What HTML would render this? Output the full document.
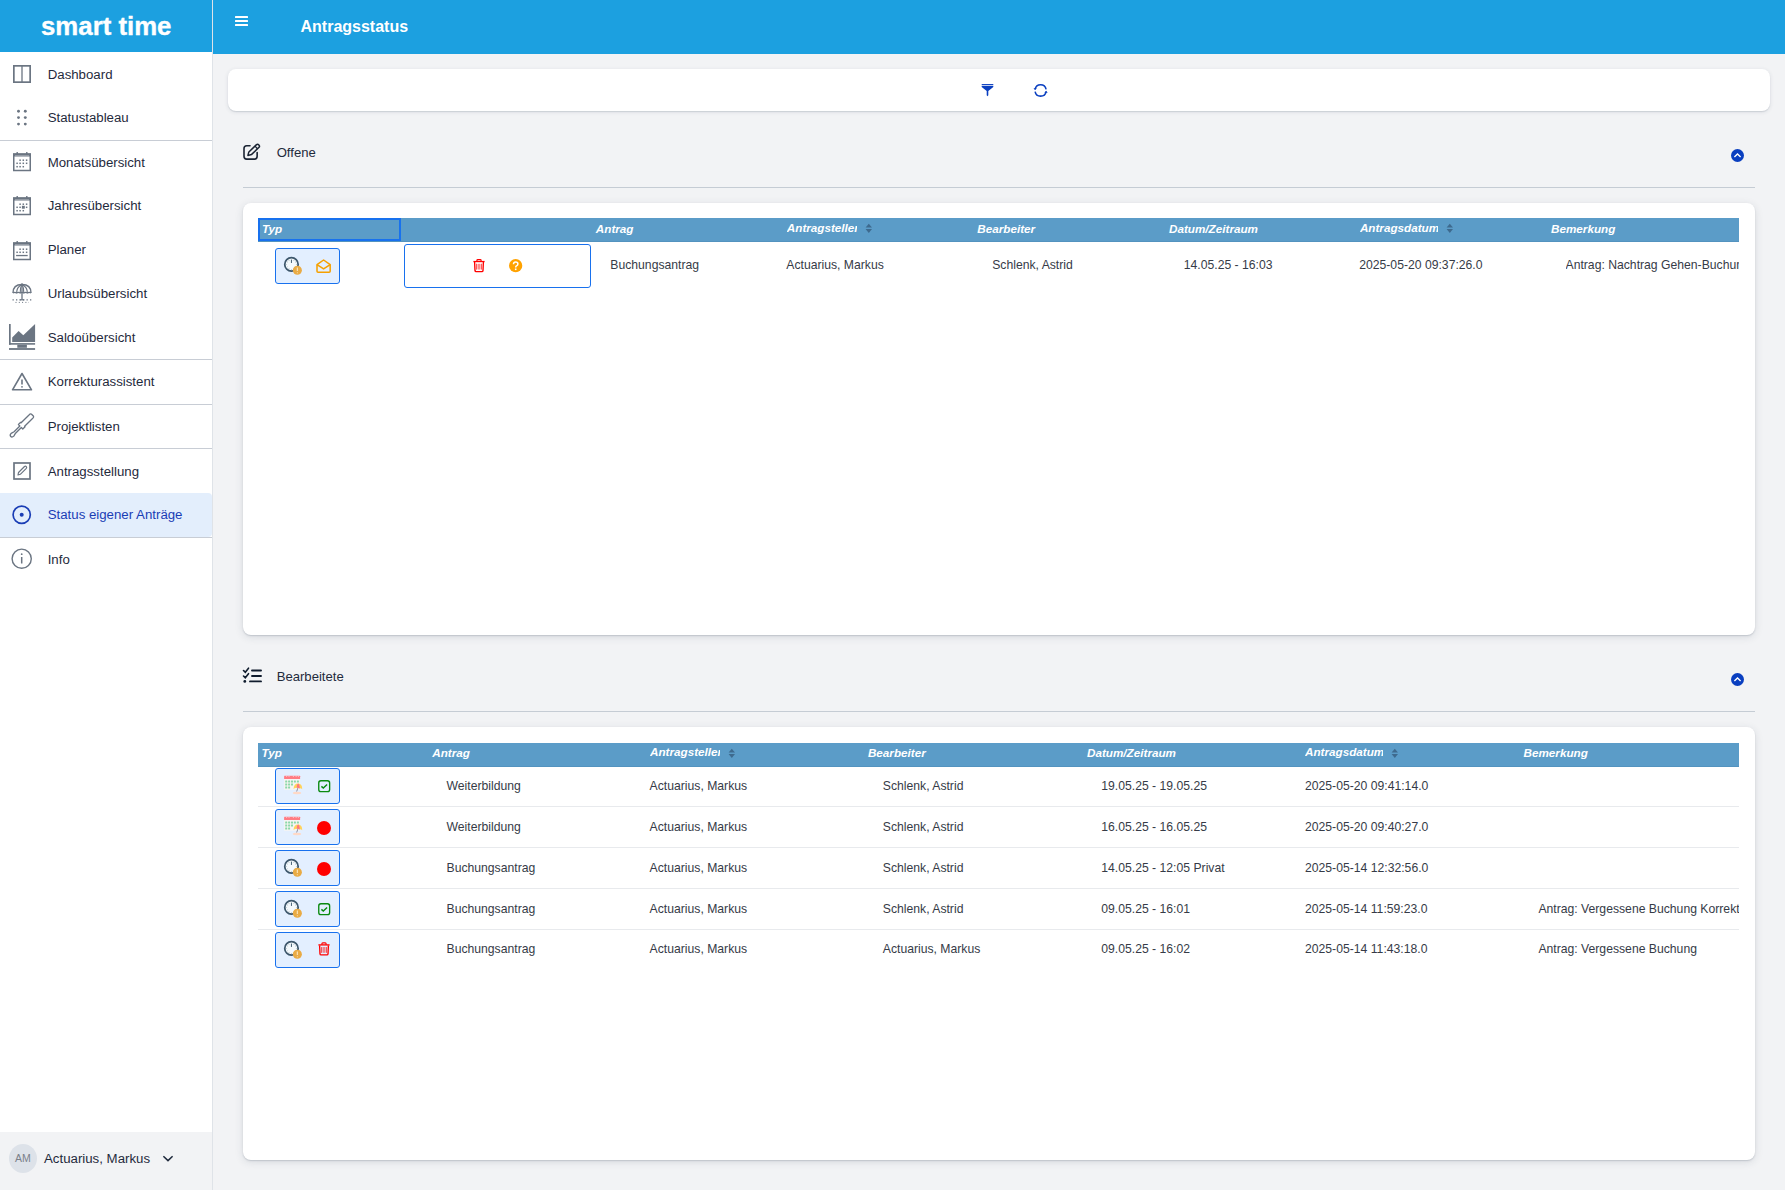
<!DOCTYPE html>
<html><head><meta charset="utf-8"><title>smart time - Antragsstatus</title>
<style>
html,body{margin:0;padding:0;width:1785px;height:1190px;overflow:hidden;background:#f2f3f5;}
body{position:relative;font-family:"Liberation Sans", sans-serif;}
.t{position:absolute;white-space:nowrap;}
svg{overflow:visible;}
</style></head><body>
<div style="position:absolute;left:0px;top:0px;width:1785px;height:1190px;background:#f2f3f5"></div><div style="position:absolute;left:213px;top:0px;width:1572px;height:54px;background:#1ca0e0"></div><div style="position:absolute;left:235px;top:16px;width:13.4px;height:1.85px;background:#fff;border-radius:0.5px"></div><div style="position:absolute;left:235px;top:20.05px;width:13.4px;height:1.85px;background:#fff;border-radius:0.5px"></div><div style="position:absolute;left:235px;top:24.1px;width:13.4px;height:1.85px;background:#fff;border-radius:0.5px"></div><div class="t" style="left:300.5px;top:19.46px;font-size:16px;line-height:16px;font-weight:bold;font-style:normal;color:#fff;">Antragsstatus</div><div style="position:absolute;left:0px;top:0px;width:212px;height:1190px;background:#fff"></div><div style="position:absolute;left:212px;top:0px;width:1px;height:1190px;background:#dfe3e8"></div><div style="position:absolute;left:0px;top:0px;width:212px;height:52px;background:#1ca0e0"></div><div class="t" style="left:41px;top:13.66px;font-size:25.8px;line-height:25.8px;font-weight:bold;font-style:normal;color:#fff;-webkit-text-stroke:0.35px #fff;">smart time</div><div style="position:absolute;left:0px;top:493px;width:212px;height:44px;background:#e3eefc;border-radius:0 4px 4px 0"></div><div style="position:absolute;left:0px;top:140px;width:212px;height:1px;background:#c8cdd5"></div><div style="position:absolute;left:0px;top:359px;width:212px;height:1px;background:#c8cdd5"></div><div style="position:absolute;left:0px;top:404px;width:212px;height:1px;background:#c8cdd5"></div><div style="position:absolute;left:0px;top:448px;width:212px;height:1px;background:#c8cdd5"></div><div style="position:absolute;left:0px;top:537px;width:212px;height:1px;background:#c8cdd5"></div><div class="t" style="left:47.7px;top:67.78px;font-size:13.25px;line-height:13.25px;font-weight:normal;font-style:normal;color:#1f2a3c;">Dashboard</div><div class="t" style="left:47.7px;top:110.98px;font-size:13.25px;line-height:13.25px;font-weight:normal;font-style:normal;color:#1f2a3c;">Statustableau</div><div class="t" style="left:47.7px;top:155.98px;font-size:13.25px;line-height:13.25px;font-weight:normal;font-style:normal;color:#1f2a3c;">Monatsübersicht</div><div class="t" style="left:47.7px;top:199.48px;font-size:13.25px;line-height:13.25px;font-weight:normal;font-style:normal;color:#1f2a3c;">Jahresübersicht</div><div class="t" style="left:47.7px;top:242.78px;font-size:13.25px;line-height:13.25px;font-weight:normal;font-style:normal;color:#1f2a3c;">Planer</div><div class="t" style="left:47.7px;top:286.58px;font-size:13.25px;line-height:13.25px;font-weight:normal;font-style:normal;color:#1f2a3c;">Urlaubsübersicht</div><div class="t" style="left:47.7px;top:330.78px;font-size:13.25px;line-height:13.25px;font-weight:normal;font-style:normal;color:#1f2a3c;">Saldoübersicht</div><div class="t" style="left:47.7px;top:374.68px;font-size:13.25px;line-height:13.25px;font-weight:normal;font-style:normal;color:#1f2a3c;">Korrekturassistent</div><div class="t" style="left:47.7px;top:419.68px;font-size:13.25px;line-height:13.25px;font-weight:normal;font-style:normal;color:#1f2a3c;">Projektlisten</div><div class="t" style="left:47.7px;top:464.68px;font-size:13.25px;line-height:13.25px;font-weight:normal;font-style:normal;color:#1f2a3c;">Antragsstellung</div><div class="t" style="left:47.7px;top:507.88px;font-size:13.25px;line-height:13.25px;font-weight:normal;font-style:normal;color:#1a3db5;">Status eigener Anträge</div><div class="t" style="left:47.7px;top:552.58px;font-size:13.25px;line-height:13.25px;font-weight:normal;font-style:normal;color:#1f2a3c;">Info</div><svg style="position:absolute;left:13px;top:65px" width="18" height="18" viewBox="0 0 18 18"><rect x="0.85" y="0.85" width="16.3" height="16.3" fill="none" stroke="#6b7582" stroke-width="1.7"/><line x1="9" y1="1" x2="9" y2="17" stroke="#6b7582" stroke-width="1.3"/></svg><svg style="position:absolute;left:16px;top:109px" width="12" height="18" viewBox="0 0 12 18"><circle cx="2.5" cy="2.3" r="1.45" fill="#6b7582"/><circle cx="2.5" cy="8.6" r="1.45" fill="#6b7582"/><circle cx="2.5" cy="15.1" r="1.45" fill="#6b7582"/><circle cx="9.3" cy="2.3" r="1.45" fill="#6b7582"/><circle cx="9.3" cy="8.6" r="1.45" fill="#6b7582"/><circle cx="9.3" cy="15.1" r="1.45" fill="#6b7582"/></svg><svg style="position:absolute;left:13px;top:152px" width="18" height="19" viewBox="0 0 18 19"><rect x="0.75" y="1.9" width="16.5" height="16.6" fill="none" stroke="#6b7582" stroke-width="1.5"/><rect x="0.75" y="1.9" width="16.5" height="2.6" fill="#6b7582"/><rect x="2" y="3" width="14" height="0.8" fill="#fff" opacity="0.35"/><rect x="3.5" y="0" width="1.4" height="2.6" fill="#6b7582"/><rect x="13.1" y="0" width="1.4" height="2.6" fill="#6b7582"/><rect x="6.35" y="7.449999999999999" width="1.5" height="1.5" fill="#6b7582"/><rect x="9.55" y="7.449999999999999" width="1.5" height="1.5" fill="#6b7582"/><rect x="12.85" y="7.449999999999999" width="1.5" height="1.5" fill="#6b7582"/><rect x="3.3499999999999996" y="10.55" width="1.5" height="1.5" fill="#6b7582"/><rect x="6.35" y="10.55" width="1.5" height="1.5" fill="#6b7582"/><rect x="9.55" y="10.55" width="1.5" height="1.5" fill="#6b7582"/><rect x="12.85" y="10.55" width="1.5" height="1.5" fill="#6b7582"/><rect x="3.3499999999999996" y="13.95" width="1.5" height="1.5" fill="#6b7582"/><rect x="6.35" y="13.95" width="1.5" height="1.5" fill="#6b7582"/><rect x="9.55" y="13.95" width="1.5" height="1.5" fill="#6b7582"/></svg><svg style="position:absolute;left:13px;top:196.3px" width="18" height="19" viewBox="0 0 18 19"><rect x="0.75" y="1.9" width="16.5" height="16.6" fill="none" stroke="#6b7582" stroke-width="1.5"/><rect x="0.75" y="1.9" width="16.5" height="2.6" fill="#6b7582"/><rect x="2" y="3" width="14" height="0.8" fill="#fff" opacity="0.35"/><rect x="3.5" y="0" width="1.4" height="2.6" fill="#6b7582"/><rect x="13.1" y="0" width="1.4" height="2.6" fill="#6b7582"/><rect x="8.9" y="9.8" width="2.9" height="2.9" fill="#6b7582"/><rect x="6.35" y="7.449999999999999" width="1.5" height="1.5" fill="#6b7582"/><rect x="9.55" y="7.449999999999999" width="1.5" height="1.5" fill="#6b7582"/><rect x="12.85" y="7.449999999999999" width="1.5" height="1.5" fill="#6b7582"/><rect x="3.3499999999999996" y="10.55" width="1.5" height="1.5" fill="#6b7582"/><rect x="6.35" y="10.55" width="1.5" height="1.5" fill="#6b7582"/><rect x="12.85" y="10.55" width="1.5" height="1.5" fill="#6b7582"/><rect x="3.3499999999999996" y="13.95" width="1.5" height="1.5" fill="#6b7582"/><rect x="6.35" y="13.95" width="1.5" height="1.5" fill="#6b7582"/><rect x="9.55" y="13.95" width="1.5" height="1.5" fill="#6b7582"/></svg><svg style="position:absolute;left:13px;top:240.5px" width="18" height="19" viewBox="0 0 18 19"><rect x="0.75" y="1.9" width="16.5" height="16.6" fill="none" stroke="#6b7582" stroke-width="1.5"/><rect x="0.75" y="1.9" width="16.5" height="2.6" fill="#6b7582"/><rect x="2" y="3" width="14" height="0.8" fill="#fff" opacity="0.35"/><rect x="3.5" y="0" width="1.4" height="2.6" fill="#6b7582"/><rect x="13.1" y="0" width="1.4" height="2.6" fill="#6b7582"/><rect x="3.1" y="13.9" width="11.6" height="1.3" fill="#6b7582"/><rect x="6.35" y="7.449999999999999" width="1.5" height="1.5" fill="#6b7582"/><rect x="9.55" y="7.449999999999999" width="1.5" height="1.5" fill="#6b7582"/><rect x="12.85" y="7.449999999999999" width="1.5" height="1.5" fill="#6b7582"/><rect x="3.3499999999999996" y="10.55" width="1.5" height="1.5" fill="#6b7582"/><rect x="6.35" y="10.55" width="1.5" height="1.5" fill="#6b7582"/><rect x="9.55" y="10.55" width="1.5" height="1.5" fill="#6b7582"/><rect x="12.85" y="10.55" width="1.5" height="1.5" fill="#6b7582"/></svg><svg style="position:absolute;left:11.5px;top:283px" width="20" height="21" viewBox="0 0 20 21"><path d="M1 10 Q1 1.5 10 1.5 Q19 1.5 19 10" fill="none" stroke="#6b7582" stroke-width="1.4"/><path d="M1 10 Q2.8 8.8 4.6 10 Q6.4 8.8 8.2 10 Q10 8.8 11.8 10 Q13.6 8.8 15.4 10 Q17.2 8.8 19 10" fill="none" stroke="#6b7582" stroke-width="1.3"/><path d="M4.6 10 Q4.6 4 10 1.5 M8.2 10 Q8 4.5 10 1.5 M11.8 10 Q12 4.5 10 1.5 M15.4 10 Q15.4 4 10 1.5" fill="none" stroke="#6b7582" stroke-width="1.1"/><line x1="10" y1="0.3" x2="10" y2="16.8" stroke="#6b7582" stroke-width="1.3"/><line x1="7.8" y1="16.8" x2="12.2" y2="16.8" stroke="#6b7582" stroke-width="1.2"/><line x1="0.5" y1="16.9" x2="19.5" y2="16.9" stroke="#6b7582" stroke-width="1.1" stroke-dasharray="1.3 2.2"/><line x1="3.5" y1="19.4" x2="17" y2="19.4" stroke="#6b7582" stroke-width="1" stroke-dasharray="1 2.3"/></svg><svg style="position:absolute;left:8.9px;top:324px" width="26.1" height="26" viewBox="0 0 26.1 26"><rect x="0" y="0" width="1.7" height="20.7" fill="#6b7582"/><rect x="0" y="19.1" width="26.1" height="1.6" fill="#6b7582"/><path d="M3.2 13.4 L9.6 7 L14.3 11.2 L26.1 0 V17.9 H3.2 Z" fill="#6b7582"/><rect x="8.3" y="20.7" width="9.6" height="3.1" fill="#6b7582"/><rect x="0" y="24.1" width="26.1" height="1.8" fill="#6b7582"/></svg><svg style="position:absolute;left:11px;top:372px" width="22" height="19" viewBox="0 0 22 19"><path d="M11 1.5 L20.5 17.8 H1.5 Z" fill="none" stroke="#6b7582" stroke-width="1.6" stroke-linejoin="round"/><line x1="11" y1="7.5" x2="11" y2="12.5" stroke="#6b7582" stroke-width="1.6"/><circle cx="11" cy="14.8" r="0.9" fill="#6b7582"/></svg><svg style="position:absolute;left:6px;top:410px" width="32" height="32" viewBox="0 0 32 32"><g transform="translate(15.6 15.8) rotate(-44.5)"><path d="M-15.2 0 Q-15.2 -1.8 -12.8 -1.9 L-9.5 -1.05 H-1.4 V-3.1 H1.8 V-2.5 H13.2 Q15.2 -2.6 15.2 -0.9 V0.9 Q15.2 2.6 13.2 2.5 H1.8 V3.1 H-1.4 V1.05 H-9.5 L-12.8 1.9 Q-15.2 1.8 -15.2 0 Z" fill="none" stroke="#6b7582" stroke-width="1.3" stroke-linejoin="round"/></g></svg><svg style="position:absolute;left:13px;top:462px" width="18" height="18" viewBox="0 0 18 18"><rect x="1" y="1" width="16" height="16" fill="none" stroke="#6b7582" stroke-width="1.7"/><path d="M5 13 L5.5 10.5 L11.5 4.5 Q12.5 3.8 13.3 4.6 Q14 5.4 13.3 6.3 L7.3 12.3 Z" fill="none" stroke="#6b7582" stroke-width="1.2" stroke-linejoin="round"/></svg><svg style="position:absolute;left:12px;top:505px" width="20" height="20" viewBox="0 0 20 20"><circle cx="9.7" cy="9.7" r="8.6" fill="none" stroke="#1a3db5" stroke-width="1.7"/><circle cx="9.7" cy="9.7" r="2" fill="#1a3db5"/></svg><svg style="position:absolute;left:11px;top:548px" width="22" height="22" viewBox="0 0 22 22"><circle cx="10.7" cy="10.7" r="9.6" fill="none" stroke="#6b7582" stroke-width="1.4"/><line x1="10.7" y1="9" x2="10.7" y2="15.5" stroke="#6b7582" stroke-width="1.5"/><circle cx="10.7" cy="6.2" r="0.9" fill="#6b7582"/></svg><div style="position:absolute;left:0px;top:1132px;width:212px;height:58px;background:#f2f3f5"></div><div style="position:absolute;left:9px;top:1144px;width:28px;height:29px;background:#dde2e9;border-radius:50%"></div><div class="t" style="left:15px;top:1153.11px;font-size:10.5px;line-height:10.5px;font-weight:normal;font-style:normal;color:#7a808a;">AM</div><div class="t" style="left:44px;top:1152.28px;font-size:13.25px;line-height:13.25px;font-weight:normal;font-style:normal;color:#1f2a3c;">Actuarius, Markus</div><svg style="position:absolute;left:162px;top:1154px" width="12" height="9" viewBox="0 0 12 9"><path d="M1.4 2.2 L6 6.6 L10.6 2.2" fill="none" stroke="#1f2a3c" stroke-width="1.5"/></svg><div style="position:absolute;left:228px;top:69px;width:1542px;height:42px;background:#fff;border-radius:8px;box-shadow:0 1px 4px rgba(40,55,80,0.12),0 1px 1px rgba(40,55,80,0.12)"></div><svg style="position:absolute;left:981px;top:83px" width="13" height="14" viewBox="0 0 13 14"><rect x="0.7" y="1.05" width="11.6" height="0.95" fill="#0a3fc0"/><path d="M0.7 2.85 H12.3 V4.1 L7.3 7.9 V12.3 L6.5 13.2 L5.7 12.3 V7.9 L0.7 4.1 Z" fill="#0a3fc0"/></svg><svg style="position:absolute;left:1033px;top:83px" width="15" height="15" viewBox="0 0 15 15"><path d="M2.1 6.3 A5.6 5.6 0 0 1 13.1 6.3" fill="none" stroke="#0a3fc0" stroke-width="1.55"/><path d="M13.1 8.6 A5.6 5.6 0 0 1 2.1 8.6" fill="none" stroke="#0a3fc0" stroke-width="1.55"/><path d="M0.5 5.2 L3.9 5.2 L2.0 7.1 Z" fill="#0a3fc0"/><path d="M11.3 9.7 L14.7 9.7 L13.2 7.7 Z" fill="#0a3fc0"/></svg><div class="t" style="left:276.7px;top:145.91px;font-size:13.1px;line-height:13.1px;font-weight:normal;font-style:normal;color:#1f2a3c;">Offene</div><div style="position:absolute;left:243px;top:187px;width:1512px;height:1px;background:#c5ccd4"></div><svg style="position:absolute;left:243px;top:143px" width="18" height="18" viewBox="0 0 18 18"><path d="M7 2.75 H3.7 Q1 2.75 1 5.45 V13.3 Q1 16.1 3.7 16.1 H11.4 Q14.15 16.1 14.15 13.3 V9.6" fill="none" stroke="#1b2433" stroke-width="1.6" stroke-linecap="round"/><g transform="translate(4.9 12.4) rotate(-43.7)"><path d="M0 0 L3.1 -1.85 H13.3 Q15.2 -1.85 15.2 0 Q15.2 1.85 13.3 1.85 H3.1 Z" fill="none" stroke="#1b2433" stroke-width="1.5" stroke-linejoin="round"/><line x1="11.5" y1="-1.8" x2="11.5" y2="1.8" stroke="#1b2433" stroke-width="1.3"/></g></svg><div class="t" style="left:276.7px;top:670.11px;font-size:13.1px;line-height:13.1px;font-weight:normal;font-style:normal;color:#1f2a3c;">Bearbeitete</div><div style="position:absolute;left:243px;top:711px;width:1512px;height:1px;background:#c5ccd4"></div><svg style="position:absolute;left:242px;top:667px" width="20" height="17" viewBox="0 0 20 17"><path d="M1.5 3.5 L3.3 5.2 L6.5 1.2" fill="none" stroke="#0f1b2d" stroke-width="1.6" stroke-linecap="round"/><path d="M1.5 9 L3.3 10.7 L6.5 6.7" fill="none" stroke="#0f1b2d" stroke-width="1.6" stroke-linecap="round"/><circle cx="2.8" cy="14.4" r="1.4" fill="#0f1b2d"/><line x1="10" y1="3.5" x2="19" y2="3.5" stroke="#0f1b2d" stroke-width="1.9" stroke-linecap="round"/><line x1="10" y1="9" x2="19" y2="9" stroke="#0f1b2d" stroke-width="1.9" stroke-linecap="round"/><line x1="8" y1="14.4" x2="19" y2="14.4" stroke="#0f1b2d" stroke-width="1.9" stroke-linecap="round"/></svg><svg style="position:absolute;left:1731px;top:149px" width="13" height="13" viewBox="0 0 13 13"><circle cx="6.5" cy="6.5" r="6.5" fill="#0a3fc0"/><path d="M3.4 8.1 L6.5 5 L9.6 8.1" fill="none" stroke="#fff" stroke-width="1.35"/></svg><svg style="position:absolute;left:1731px;top:673px" width="13" height="13" viewBox="0 0 13 13"><circle cx="6.5" cy="6.5" r="6.5" fill="#0a3fc0"/><path d="M3.4 8.1 L6.5 5 L9.6 8.1" fill="none" stroke="#fff" stroke-width="1.35"/></svg><div style="position:absolute;left:243px;top:203px;width:1512px;height:432px;background:#fff;border-radius:8px;box-shadow:0 2px 9px rgba(40,55,80,0.13),0 1px 1.5px rgba(40,55,80,0.18)"></div><div style="position:absolute;left:243px;top:727px;width:1512px;height:433px;background:#fff;border-radius:8px;box-shadow:0 2px 9px rgba(40,55,80,0.13),0 1px 1.5px rgba(40,55,80,0.18)"></div><div style="position:absolute;left:258px;top:218px;width:1481px;height:24px;background:#5b9cc8;box-shadow:inset 0 -1px 0 rgba(30,80,130,0.12)"></div><div style="position:absolute;left:258px;top:218px;width:143px;height:23px;border:2px solid #1871ee;box-sizing:border-box"></div><div class="t" style="left:261.9px;top:222.60px;font-size:11.7px;line-height:11.7px;font-weight:bold;font-style:italic;color:#fff;">Typ</div><div class="t" style="left:595.8px;top:222.60px;font-size:11.7px;line-height:11.7px;font-weight:bold;font-style:italic;color:#fff;">Antrag</div><div class="t" style="left:786.8px;top:221.60px;font-size:11.7px;line-height:11.7px;font-weight:bold;font-style:italic;color:#fff;width:70px;overflow:hidden;padding-bottom:4px;">Antragsteller</div><svg style="position:absolute;left:864.9px;top:223px" width="8" height="11" viewBox="0 0 8 11"><path d="M3.8 0.8 L7 4.6 H0.6 Z" fill="#3e6a8e"/><path d="M0.6 6.1 H7 L3.8 10.1 Z" fill="#3e6a8e"/></svg><div class="t" style="left:977.3px;top:222.60px;font-size:11.7px;line-height:11.7px;font-weight:bold;font-style:italic;color:#fff;">Bearbeiter</div><div class="t" style="left:1169px;top:222.60px;font-size:11.7px;line-height:11.7px;font-weight:bold;font-style:italic;color:#fff;">Datum/Zeitraum</div><div class="t" style="left:1359.9px;top:221.60px;font-size:11.7px;line-height:11.7px;font-weight:bold;font-style:italic;color:#fff;width:78px;overflow:hidden;padding-bottom:4px;">Antragsdatum</div><svg style="position:absolute;left:1445.9px;top:223px" width="8" height="11" viewBox="0 0 8 11"><path d="M3.8 0.8 L7 4.6 H0.6 Z" fill="#3e6a8e"/><path d="M0.6 6.1 H7 L3.8 10.1 Z" fill="#3e6a8e"/></svg><div class="t" style="left:1551px;top:222.60px;font-size:11.7px;line-height:11.7px;font-weight:bold;font-style:italic;color:#fff;">Bemerkung</div><div style="position:absolute;left:275px;top:248px;width:65px;height:36px;background:#e3efff;border:1.6px solid #1871ee;border-radius:3px;box-sizing:border-box"></div><svg style="position:absolute;left:283px;top:256px" width="19" height="19" viewBox="0 0 18 18"><circle cx="8" cy="8" r="6.35" fill="#f4f9fc" stroke="#3d576c" stroke-width="1.65"/><line x1="8" y1="3.4" x2="8" y2="6.6" stroke="#3d576c" stroke-width="0.9"/><circle cx="10.30" cy="4.02" r="0.4" fill="#7d92a3"/><circle cx="11.98" cy="5.70" r="0.4" fill="#7d92a3"/><circle cx="12.60" cy="8.00" r="0.4" fill="#7d92a3"/><circle cx="8" cy="12.60" r="0.4" fill="#7d92a3"/><circle cx="5.70" cy="11.98" r="0.4" fill="#7d92a3"/><circle cx="4.02" cy="10.30" r="0.4" fill="#7d92a3"/><circle cx="3.40" cy="8.00" r="0.4" fill="#7d92a3"/><circle cx="4.02" cy="5.70" r="0.4" fill="#7d92a3"/><circle cx="5.70" cy="4.02" r="0.4" fill="#7d92a3"/><circle cx="13.6" cy="13.5" r="4.3" fill="#e9ab45"/><line x1="13.6" y1="11" x2="13.6" y2="14.3" stroke="#fbe3b8" stroke-width="1.1"/><circle cx="13.6" cy="15.9" r="0.55" fill="#fbe3b8"/></svg><svg style="position:absolute;left:316.3px;top:258.6px" width="15.2" height="14.2" viewBox="0 0 15 15" preserveAspectRatio="none"><path d="M1 6 L7.5 1 L14 6 V13 Q14 14 13 14 H2 Q1 14 1 13 Z" fill="none" stroke="#f5a000" stroke-width="1.5" stroke-linejoin="round"/><path d="M1 6 L7.5 10.5 L14 6" fill="none" stroke="#f5a000" stroke-width="1.5" stroke-linejoin="round"/></svg><div style="position:absolute;left:404px;top:244px;width:187px;height:44px;background:#fff;border:1.6px solid #1871ee;border-radius:3px;box-sizing:border-box"></div><svg style="position:absolute;left:473px;top:259px" width="12" height="13.3" viewBox="0 0 12 13.3"><path d="M0.4 2.55 H11.6" stroke="#f00" stroke-width="1.3"/><path d="M3.9 2.4 V1.5 Q3.9 0.6 4.8 0.6 H7.2 Q8.1 0.6 8.1 1.5 V2.4" fill="none" stroke="#f00" stroke-width="1.2"/><path d="M1.6 3 L2 11.7 Q2.1 12.6 3.1 12.6 H8.9 Q9.9 12.6 10 11.7 L10.4 3" fill="none" stroke="#f00" stroke-width="1.35"/><rect x="3.35" y="4.6" width="0.9" height="6.1" rx="0.45" fill="#f00"/><rect x="5.55" y="4.6" width="0.9" height="6.1" rx="0.45" fill="#f00"/><rect x="7.75" y="4.6" width="0.9" height="6.1" rx="0.45" fill="#f00"/></svg><svg style="position:absolute;left:509px;top:259px" width="13.3" height="13.3" viewBox="0 0 13.3 13.3"><circle cx="6.65" cy="6.65" r="6.65" fill="#ffa200"/><path d="M4.5 5.2 Q4.5 3 6.7 3 Q8.9 3 8.9 5 Q8.9 6.3 7.5 6.9 Q6.7 7.3 6.7 8.5" fill="none" stroke="#fff" stroke-width="1.5"/><rect x="5.9" y="9.5" width="1.6" height="1.6" fill="#fff"/></svg><div class="t" style="left:610.3px;top:258.77px;font-size:12.2px;line-height:12.2px;font-weight:normal;font-style:normal;color:#363b47;">Buchungsantrag</div><div class="t" style="left:786.3px;top:258.77px;font-size:12.2px;line-height:12.2px;font-weight:normal;font-style:normal;color:#363b47;">Actuarius, Markus</div><div class="t" style="left:992.2px;top:258.77px;font-size:12.2px;line-height:12.2px;font-weight:normal;font-style:normal;color:#363b47;">Schlenk, Astrid</div><div class="t" style="left:1183.8px;top:258.77px;font-size:12.2px;line-height:12.2px;font-weight:normal;font-style:normal;color:#363b47;">14.05.25 - 16:03</div><div class="t" style="left:1359.2px;top:258.77px;font-size:12.2px;line-height:12.2px;font-weight:normal;font-style:normal;color:#363b47;">2025-05-20 09:37:26.0</div><div class="t" style="left:1565.5px;top:258.77px;font-size:12.2px;line-height:12.2px;font-weight:normal;font-style:normal;color:#363b47;width:173.5px;overflow:hidden;padding-bottom:4px;">Antrag: Nachtrag Gehen-Buchung</div><div style="position:absolute;left:258px;top:743px;width:1481px;height:23.5px;background:#5b9cc8;box-shadow:inset 0 -1px 0 rgba(30,80,130,0.12)"></div><div class="t" style="left:261.6px;top:747.10px;font-size:11.7px;line-height:11.7px;font-weight:bold;font-style:italic;color:#fff;">Typ</div><div class="t" style="left:432.2px;top:747.10px;font-size:11.7px;line-height:11.7px;font-weight:bold;font-style:italic;color:#fff;">Antrag</div><div class="t" style="left:650px;top:746.10px;font-size:11.7px;line-height:11.7px;font-weight:bold;font-style:italic;color:#fff;width:70px;overflow:hidden;padding-bottom:4px;">Antragsteller</div><svg style="position:absolute;left:727.9px;top:747.5px" width="8" height="11" viewBox="0 0 8 11"><path d="M3.8 0.8 L7 4.6 H0.6 Z" fill="#3e6a8e"/><path d="M0.6 6.1 H7 L3.8 10.1 Z" fill="#3e6a8e"/></svg><div class="t" style="left:867.9px;top:747.10px;font-size:11.7px;line-height:11.7px;font-weight:bold;font-style:italic;color:#fff;">Bearbeiter</div><div class="t" style="left:1087px;top:747.10px;font-size:11.7px;line-height:11.7px;font-weight:bold;font-style:italic;color:#fff;">Datum/Zeitraum</div><div class="t" style="left:1305px;top:746.10px;font-size:11.7px;line-height:11.7px;font-weight:bold;font-style:italic;color:#fff;width:78px;overflow:hidden;padding-bottom:4px;">Antragsdatum</div><svg style="position:absolute;left:1390.9px;top:747.5px" width="8" height="11" viewBox="0 0 8 11"><path d="M3.8 0.8 L7 4.6 H0.6 Z" fill="#3e6a8e"/><path d="M0.6 6.1 H7 L3.8 10.1 Z" fill="#3e6a8e"/></svg><div class="t" style="left:1523.5px;top:747.10px;font-size:11.7px;line-height:11.7px;font-weight:bold;font-style:italic;color:#fff;">Bemerkung</div><div style="position:absolute;left:258px;top:806px;width:1481px;height:1px;background:#e8eaed"></div><div style="position:absolute;left:275px;top:768.3px;width:65px;height:36px;background:#e3efff;border:1.6px solid #1871ee;border-radius:3px;box-sizing:border-box"></div><svg style="position:absolute;left:284px;top:776.3px" width="19" height="19" viewBox="0 0 19 19"><rect x="0.1" y="2.6" width="16" height="11.2" fill="#f6f4f3"/><rect x="0.1" y="-0.2" width="16" height="3.3" rx="0.4" fill="#ff7c84"/><rect x="2.3" y="-0.1" width="0.8" height="1.0" fill="#ffd9dc"/><rect x="4.6" y="-0.1" width="0.8" height="1.0" fill="#ffd9dc"/><rect x="8.9" y="-0.1" width="0.8" height="1.0" fill="#ffd9dc"/><rect x="11.7" y="-0.1" width="0.8" height="1.0" fill="#ffd9dc"/><rect x="13.9" y="-0.1" width="0.8" height="1.0" fill="#ffd9dc"/><rect x="1.2000000000000002" y="4.6" width="2" height="2" rx="0.3" fill="#8ad8a8"/><rect x="4.1" y="4.6" width="2" height="2" rx="0.3" fill="#8ad8a8"/><rect x="7.0" y="4.6" width="2" height="2" rx="0.3" fill="#8ad8a8"/><rect x="9.9" y="4.6" width="2" height="2" rx="0.3" fill="#8ad8a8"/><rect x="12.9" y="4.6" width="2" height="2" rx="0.3" fill="#8ad8a8"/><rect x="1.2000000000000002" y="7.5" width="2" height="2" rx="0.3" fill="#8ad8a8"/><rect x="4.1" y="7.5" width="2" height="2" rx="0.3" fill="#8ad8a8"/><rect x="7.0" y="7.5" width="2" height="2" rx="0.3" fill="#8ad8a8"/><rect x="1.2000000000000002" y="10.5" width="2" height="2" rx="0.3" fill="#8ad8a8"/><rect x="4.1" y="10.5" width="2" height="2" rx="0.3" fill="#8ad8a8"/><line x1="14.1" y1="11.5" x2="12.6" y2="15.6" stroke="#8d8c9c" stroke-width="0.95"/><path d="M9.5 13 Q10 7.6 14.1 7.6 Q18.3 7.8 18.2 13.2 Q17 12.2 15.8 12.4 Q14.6 11.6 13 11.8 Q11.2 11.6 9.5 13 Z" fill="#ffd35c"/><path d="M12.6 11.8 Q12.8 8.2 14.1 7.6 Q15.6 8.4 15.8 12.4 Q14.3 11.6 12.6 11.8 Z" fill="#ff7680"/><ellipse cx="13" cy="17" rx="4.2" ry="1.2" fill="#ffd9c6"/></svg><svg style="position:absolute;left:317.8px;top:779.8px" width="12.4" height="12.4" viewBox="0 0 12.4 12.4"><rect x="0.75" y="0.75" width="10.9" height="10.9" rx="2.2" fill="none" stroke="#0a8a10" stroke-width="1.35"/><path d="M3.4 6.4 L5.3 8.1 L9.1 4.4" fill="none" stroke="#0a8a10" stroke-width="1.4"/></svg><div class="t" style="left:446.5px;top:780.17px;font-size:12.2px;line-height:12.2px;font-weight:normal;font-style:normal;color:#363b47;">Weiterbildung</div><div class="t" style="left:649.6px;top:780.17px;font-size:12.2px;line-height:12.2px;font-weight:normal;font-style:normal;color:#363b47;">Actuarius, Markus</div><div class="t" style="left:882.8px;top:780.17px;font-size:12.2px;line-height:12.2px;font-weight:normal;font-style:normal;color:#363b47;">Schlenk, Astrid</div><div class="t" style="left:1101.3px;top:780.17px;font-size:12.2px;line-height:12.2px;font-weight:normal;font-style:normal;color:#363b47;">19.05.25 - 19.05.25</div><div class="t" style="left:1305px;top:780.17px;font-size:12.2px;line-height:12.2px;font-weight:normal;font-style:normal;color:#363b47;">2025-05-20 09:41:14.0</div><div style="position:absolute;left:258px;top:847px;width:1481px;height:1px;background:#e8eaed"></div><div style="position:absolute;left:275px;top:809.3px;width:65px;height:36px;background:#e3efff;border:1.6px solid #1871ee;border-radius:3px;box-sizing:border-box"></div><svg style="position:absolute;left:284px;top:817.3px" width="19" height="19" viewBox="0 0 19 19"><rect x="0.1" y="2.6" width="16" height="11.2" fill="#f6f4f3"/><rect x="0.1" y="-0.2" width="16" height="3.3" rx="0.4" fill="#ff7c84"/><rect x="2.3" y="-0.1" width="0.8" height="1.0" fill="#ffd9dc"/><rect x="4.6" y="-0.1" width="0.8" height="1.0" fill="#ffd9dc"/><rect x="8.9" y="-0.1" width="0.8" height="1.0" fill="#ffd9dc"/><rect x="11.7" y="-0.1" width="0.8" height="1.0" fill="#ffd9dc"/><rect x="13.9" y="-0.1" width="0.8" height="1.0" fill="#ffd9dc"/><rect x="1.2000000000000002" y="4.6" width="2" height="2" rx="0.3" fill="#8ad8a8"/><rect x="4.1" y="4.6" width="2" height="2" rx="0.3" fill="#8ad8a8"/><rect x="7.0" y="4.6" width="2" height="2" rx="0.3" fill="#8ad8a8"/><rect x="9.9" y="4.6" width="2" height="2" rx="0.3" fill="#8ad8a8"/><rect x="12.9" y="4.6" width="2" height="2" rx="0.3" fill="#8ad8a8"/><rect x="1.2000000000000002" y="7.5" width="2" height="2" rx="0.3" fill="#8ad8a8"/><rect x="4.1" y="7.5" width="2" height="2" rx="0.3" fill="#8ad8a8"/><rect x="7.0" y="7.5" width="2" height="2" rx="0.3" fill="#8ad8a8"/><rect x="1.2000000000000002" y="10.5" width="2" height="2" rx="0.3" fill="#8ad8a8"/><rect x="4.1" y="10.5" width="2" height="2" rx="0.3" fill="#8ad8a8"/><line x1="14.1" y1="11.5" x2="12.6" y2="15.6" stroke="#8d8c9c" stroke-width="0.95"/><path d="M9.5 13 Q10 7.6 14.1 7.6 Q18.3 7.8 18.2 13.2 Q17 12.2 15.8 12.4 Q14.6 11.6 13 11.8 Q11.2 11.6 9.5 13 Z" fill="#ffd35c"/><path d="M12.6 11.8 Q12.8 8.2 14.1 7.6 Q15.6 8.4 15.8 12.4 Q14.3 11.6 12.6 11.8 Z" fill="#ff7680"/><ellipse cx="13" cy="17" rx="4.2" ry="1.2" fill="#ffd9c6"/></svg><svg style="position:absolute;left:317px;top:820.8px" width="14" height="14" viewBox="0 0 14 14"><circle cx="7" cy="7" r="7" fill="#f00"/></svg><div class="t" style="left:446.5px;top:821.47px;font-size:12.2px;line-height:12.2px;font-weight:normal;font-style:normal;color:#363b47;">Weiterbildung</div><div class="t" style="left:649.6px;top:821.47px;font-size:12.2px;line-height:12.2px;font-weight:normal;font-style:normal;color:#363b47;">Actuarius, Markus</div><div class="t" style="left:882.8px;top:821.47px;font-size:12.2px;line-height:12.2px;font-weight:normal;font-style:normal;color:#363b47;">Schlenk, Astrid</div><div class="t" style="left:1101.3px;top:821.47px;font-size:12.2px;line-height:12.2px;font-weight:normal;font-style:normal;color:#363b47;">16.05.25 - 16.05.25</div><div class="t" style="left:1305px;top:821.47px;font-size:12.2px;line-height:12.2px;font-weight:normal;font-style:normal;color:#363b47;">2025-05-20 09:40:27.0</div><div style="position:absolute;left:258px;top:888px;width:1481px;height:1px;background:#e8eaed"></div><div style="position:absolute;left:275px;top:850.2px;width:65px;height:36px;background:#e3efff;border:1.6px solid #1871ee;border-radius:3px;box-sizing:border-box"></div><svg style="position:absolute;left:283px;top:858.2px" width="19" height="19" viewBox="0 0 18 18"><circle cx="8" cy="8" r="6.35" fill="#f4f9fc" stroke="#3d576c" stroke-width="1.65"/><line x1="8" y1="3.4" x2="8" y2="6.6" stroke="#3d576c" stroke-width="0.9"/><circle cx="10.30" cy="4.02" r="0.4" fill="#7d92a3"/><circle cx="11.98" cy="5.70" r="0.4" fill="#7d92a3"/><circle cx="12.60" cy="8.00" r="0.4" fill="#7d92a3"/><circle cx="8" cy="12.60" r="0.4" fill="#7d92a3"/><circle cx="5.70" cy="11.98" r="0.4" fill="#7d92a3"/><circle cx="4.02" cy="10.30" r="0.4" fill="#7d92a3"/><circle cx="3.40" cy="8.00" r="0.4" fill="#7d92a3"/><circle cx="4.02" cy="5.70" r="0.4" fill="#7d92a3"/><circle cx="5.70" cy="4.02" r="0.4" fill="#7d92a3"/><circle cx="13.6" cy="13.5" r="4.3" fill="#e9ab45"/><line x1="13.6" y1="11" x2="13.6" y2="14.3" stroke="#fbe3b8" stroke-width="1.1"/><circle cx="13.6" cy="15.9" r="0.55" fill="#fbe3b8"/></svg><svg style="position:absolute;left:317px;top:861.7px" width="14" height="14" viewBox="0 0 14 14"><circle cx="7" cy="7" r="7" fill="#f00"/></svg><div class="t" style="left:446.5px;top:862.37px;font-size:12.2px;line-height:12.2px;font-weight:normal;font-style:normal;color:#363b47;">Buchungsantrag</div><div class="t" style="left:649.6px;top:862.37px;font-size:12.2px;line-height:12.2px;font-weight:normal;font-style:normal;color:#363b47;">Actuarius, Markus</div><div class="t" style="left:882.8px;top:862.37px;font-size:12.2px;line-height:12.2px;font-weight:normal;font-style:normal;color:#363b47;">Schlenk, Astrid</div><div class="t" style="left:1101.3px;top:862.37px;font-size:12.2px;line-height:12.2px;font-weight:normal;font-style:normal;color:#363b47;">14.05.25 - 12:05 Privat</div><div class="t" style="left:1305px;top:862.37px;font-size:12.2px;line-height:12.2px;font-weight:normal;font-style:normal;color:#363b47;">2025-05-14 12:32:56.0</div><div style="position:absolute;left:258px;top:929px;width:1481px;height:1px;background:#e8eaed"></div><div style="position:absolute;left:275px;top:891px;width:65px;height:36px;background:#e3efff;border:1.6px solid #1871ee;border-radius:3px;box-sizing:border-box"></div><svg style="position:absolute;left:283px;top:899px" width="19" height="19" viewBox="0 0 18 18"><circle cx="8" cy="8" r="6.35" fill="#f4f9fc" stroke="#3d576c" stroke-width="1.65"/><line x1="8" y1="3.4" x2="8" y2="6.6" stroke="#3d576c" stroke-width="0.9"/><circle cx="10.30" cy="4.02" r="0.4" fill="#7d92a3"/><circle cx="11.98" cy="5.70" r="0.4" fill="#7d92a3"/><circle cx="12.60" cy="8.00" r="0.4" fill="#7d92a3"/><circle cx="8" cy="12.60" r="0.4" fill="#7d92a3"/><circle cx="5.70" cy="11.98" r="0.4" fill="#7d92a3"/><circle cx="4.02" cy="10.30" r="0.4" fill="#7d92a3"/><circle cx="3.40" cy="8.00" r="0.4" fill="#7d92a3"/><circle cx="4.02" cy="5.70" r="0.4" fill="#7d92a3"/><circle cx="5.70" cy="4.02" r="0.4" fill="#7d92a3"/><circle cx="13.6" cy="13.5" r="4.3" fill="#e9ab45"/><line x1="13.6" y1="11" x2="13.6" y2="14.3" stroke="#fbe3b8" stroke-width="1.1"/><circle cx="13.6" cy="15.9" r="0.55" fill="#fbe3b8"/></svg><svg style="position:absolute;left:317.8px;top:902.5px" width="12.4" height="12.4" viewBox="0 0 12.4 12.4"><rect x="0.75" y="0.75" width="10.9" height="10.9" rx="2.2" fill="none" stroke="#0a8a10" stroke-width="1.35"/><path d="M3.4 6.4 L5.3 8.1 L9.1 4.4" fill="none" stroke="#0a8a10" stroke-width="1.4"/></svg><div class="t" style="left:446.5px;top:903.27px;font-size:12.2px;line-height:12.2px;font-weight:normal;font-style:normal;color:#363b47;">Buchungsantrag</div><div class="t" style="left:649.6px;top:903.27px;font-size:12.2px;line-height:12.2px;font-weight:normal;font-style:normal;color:#363b47;">Actuarius, Markus</div><div class="t" style="left:882.8px;top:903.27px;font-size:12.2px;line-height:12.2px;font-weight:normal;font-style:normal;color:#363b47;">Schlenk, Astrid</div><div class="t" style="left:1101.3px;top:903.27px;font-size:12.2px;line-height:12.2px;font-weight:normal;font-style:normal;color:#363b47;">09.05.25 - 16:01</div><div class="t" style="left:1305px;top:903.27px;font-size:12.2px;line-height:12.2px;font-weight:normal;font-style:normal;color:#363b47;">2025-05-14 11:59:23.0</div><div class="t" style="left:1538.4px;top:903.27px;font-size:12.2px;line-height:12.2px;font-weight:normal;font-style:normal;color:#363b47;width:200.5999999999999px;overflow:hidden;padding-bottom:4px;">Antrag: Vergessene Buchung Korrektur</div><div style="position:absolute;left:275px;top:931.5px;width:65px;height:36px;background:#e3efff;border:1.6px solid #1871ee;border-radius:3px;box-sizing:border-box"></div><svg style="position:absolute;left:283px;top:939.5px" width="19" height="19" viewBox="0 0 18 18"><circle cx="8" cy="8" r="6.35" fill="#f4f9fc" stroke="#3d576c" stroke-width="1.65"/><line x1="8" y1="3.4" x2="8" y2="6.6" stroke="#3d576c" stroke-width="0.9"/><circle cx="10.30" cy="4.02" r="0.4" fill="#7d92a3"/><circle cx="11.98" cy="5.70" r="0.4" fill="#7d92a3"/><circle cx="12.60" cy="8.00" r="0.4" fill="#7d92a3"/><circle cx="8" cy="12.60" r="0.4" fill="#7d92a3"/><circle cx="5.70" cy="11.98" r="0.4" fill="#7d92a3"/><circle cx="4.02" cy="10.30" r="0.4" fill="#7d92a3"/><circle cx="3.40" cy="8.00" r="0.4" fill="#7d92a3"/><circle cx="4.02" cy="5.70" r="0.4" fill="#7d92a3"/><circle cx="5.70" cy="4.02" r="0.4" fill="#7d92a3"/><circle cx="13.6" cy="13.5" r="4.3" fill="#e9ab45"/><line x1="13.6" y1="11" x2="13.6" y2="14.3" stroke="#fbe3b8" stroke-width="1.1"/><circle cx="13.6" cy="15.9" r="0.55" fill="#fbe3b8"/></svg><svg style="position:absolute;left:318px;top:942.0px" width="12" height="14" viewBox="0 0 12 13.3"><path d="M0.4 2.55 H11.6" stroke="#f00" stroke-width="1.3"/><path d="M3.9 2.4 V1.5 Q3.9 0.6 4.8 0.6 H7.2 Q8.1 0.6 8.1 1.5 V2.4" fill="none" stroke="#f00" stroke-width="1.2"/><path d="M1.6 3 L2 11.7 Q2.1 12.6 3.1 12.6 H8.9 Q9.9 12.6 10 11.7 L10.4 3" fill="none" stroke="#f00" stroke-width="1.35"/><rect x="3.35" y="4.6" width="0.9" height="6.1" rx="0.45" fill="#f00"/><rect x="5.55" y="4.6" width="0.9" height="6.1" rx="0.45" fill="#f00"/><rect x="7.75" y="4.6" width="0.9" height="6.1" rx="0.45" fill="#f00"/></svg><div class="t" style="left:446.5px;top:943.37px;font-size:12.2px;line-height:12.2px;font-weight:normal;font-style:normal;color:#363b47;">Buchungsantrag</div><div class="t" style="left:649.6px;top:943.37px;font-size:12.2px;line-height:12.2px;font-weight:normal;font-style:normal;color:#363b47;">Actuarius, Markus</div><div class="t" style="left:882.8px;top:943.37px;font-size:12.2px;line-height:12.2px;font-weight:normal;font-style:normal;color:#363b47;">Actuarius, Markus</div><div class="t" style="left:1101.3px;top:943.37px;font-size:12.2px;line-height:12.2px;font-weight:normal;font-style:normal;color:#363b47;">09.05.25 - 16:02</div><div class="t" style="left:1305px;top:943.37px;font-size:12.2px;line-height:12.2px;font-weight:normal;font-style:normal;color:#363b47;">2025-05-14 11:43:18.0</div><div class="t" style="left:1538.4px;top:943.37px;font-size:12.2px;line-height:12.2px;font-weight:normal;font-style:normal;color:#363b47;width:200.5999999999999px;overflow:hidden;padding-bottom:4px;">Antrag: Vergessene Buchung</div>
</body></html>
